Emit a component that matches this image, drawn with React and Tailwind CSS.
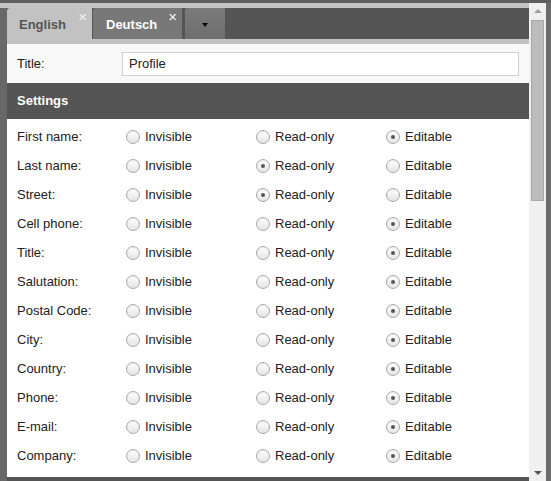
const fields = [
  ['First name:', 2],
  ['Last name:', 1],
  ['Street:', 1],
  ['Cell phone:', 2],
  ['Title:', 2],
  ['Salutation:', 2],
  ['Postal Code:', 2],
  ['City:', 2],
  ['Country:', 2],
  ['Phone:', 2],
  ['E-mail:', 2],
  ['Company:', 2],
]

const options = ['Invisible', 'Read-only', 'Editable']

function Radio({ checked }) {
  return (
    <span className="relative inline-flex h-[14px] w-[14px] shrink-0 items-center justify-center rounded-full border border-[#a9a9a9] bg-gradient-to-b from-[#ffffff] to-[#e4e4e4] shadow-[inset_0_1px_1px_rgba(0,0,0,0.08)]">
      {checked && <span className="h-[4px] w-[4px] rounded-full bg-[#555]" />}
    </span>
  )
}

function Tab({ label, active, width }) {
  return (
    <div
      className={
        'relative flex h-full items-center rounded-tl-[3px] pt-[2px] font-bold ' +
        (active ? 'bg-[#c2c2c2] text-[#555]' : 'bg-[#787878] text-white')
      }
      style={{ width }}
    >
      <span className={active ? 'pl-[12px]' : 'pl-[13px]'}>{label}</span>
      <span className="absolute right-[5px] top-[1px] text-[15px] font-normal leading-none text-[#f4f4f4]">×</span>
    </div>
  )
}

export default function App() {
  return (
    <div className="flex h-[481px] w-[551px] flex-col overflow-hidden bg-[#686868] text-[13px] text-[#222] [font-family:'Liberation_Sans',Arial,sans-serif]">
      <div className="h-[3px] bg-[#5e5e5e]" />
      <div className="flex flex-1">
        <div className="flex flex-1 flex-col">
          <div className="h-[5px] bg-[#c3c3c3]" />
          <div className="flex flex-1">
            <div className="w-[7px] bg-[#686868]" />
            <div className="flex flex-1 flex-col">
              <div className="flex h-[31px] bg-[#555]">
                <Tab label="English" active width={85} />
                <div className="w-px" />
                <Tab label="Deutsch" width={89} />
                <div className="w-[3px]" />
                <div className="flex h-full w-[40px] items-center justify-center rounded-tl-[3px] bg-gradient-to-b from-[#7a7a7a] to-[#6f6f6f]">
                  <span className="mt-[2px] h-0 w-0 border-x-[3px] border-t-[4px] border-x-transparent border-t-black" />
                </div>
              </div>
              <div className="h-[5px] bg-[#c2c2c2]" />
              <div className="flex h-[39px] items-center bg-[#f8f8f8]">
                <span className="w-[115px] pl-[10px]">Title:</span>
                <div className="flex h-[24px] w-[397px] items-center border border-[#cfcfcf] bg-white px-[6px]">
                  Profile
                </div>
              </div>
              <div className="flex h-[36px] items-center bg-[#555] pl-[10px] font-bold text-white">Settings</div>
              <div className="flex flex-1 flex-col bg-white pt-[3px]">
                {fields.map(([label, sel]) => (
                  <div key={label} className="flex h-[29px] items-center">
                    <span className="w-[119px] pl-[10px]">{label}</span>
                    {options.map((o, i) => (
                      <div key={o} className="flex w-[130px] items-center gap-[5px]">
                        <Radio checked={sel === i} />
                        <span>{o}</span>
                      </div>
                    ))}
                  </div>
                ))}
              </div>
              <div className="h-[4px] bg-[#555]" />
            </div>
          </div>
        </div>
        <div className="flex w-[17px] flex-col items-center bg-[#f0f0f0]">
          <span className="mt-[6px] h-0 w-0 border-x-[4px] border-b-[4px] border-x-transparent border-b-[#a0a0a0]" />
          <div className="mt-[7px] h-[181px] w-[13px] border border-[#a8a8a8] bg-[#bcbcbc]" />
          <div className="flex-1" />
          <span className="mb-[6px] h-0 w-0 border-x-[4px] border-t-[4px] border-x-transparent border-t-[#555]" />
        </div>
        <div className="w-[5px] bg-[#6b6b6b]" />
      </div>
    </div>
  )
}
